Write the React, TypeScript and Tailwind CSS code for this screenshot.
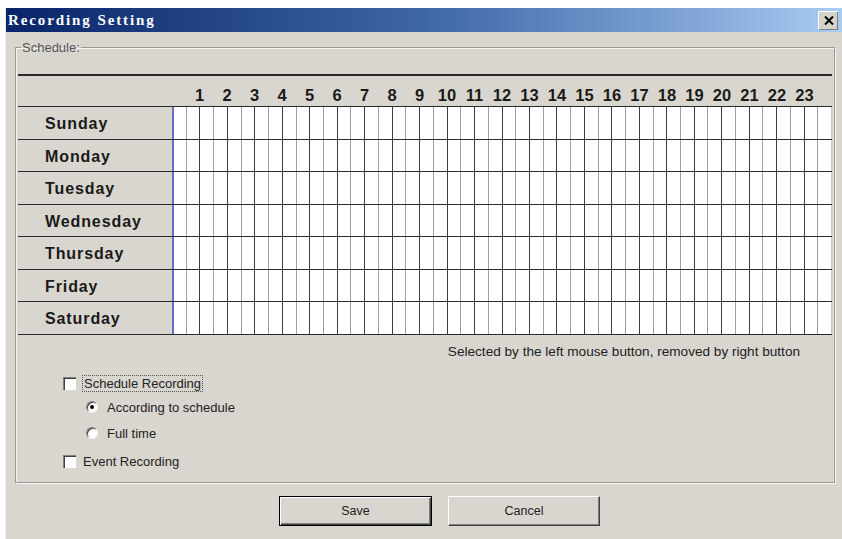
import React from "react";

const days = ["Sunday", "Monday", "Tuesday", "Wednesday", "Thursday", "Friday", "Saturday"];
const hours = Array.from({ length: 23 }, (_, i) => i + 1);
const halves = Array.from({ length: 48 }, (_, i) => i);

function cellBorder(i: number) {
  if (i === 0) return "border-l-2 border-[#6a6ad0]";
  if (i % 2 === 0) return "border-l border-[#3a3a55]";
  return "border-l border-[#a0a0a0]";
}

function Checkbox({ label, focused }: { label: string; focused?: boolean }) {
  return (
    <div className="flex items-center gap-[7px] pl-[45px]">
      <span className="block w-[13px] h-[13px] bg-white border-t border-l border-[#808080] border-b-white border-r-white shadow-[inset_1px_1px_0_#404040]" />
      <span className={focused ? "outline outline-1 outline-dotted outline-[#555] px-[1px] leading-[15px]" : "leading-[15px]"}>
        {label}
      </span>
    </div>
  );
}

function Radio({ label, checked }: { label: string; checked?: boolean }) {
  return (
    <div className="flex items-center gap-[9px] pl-[68px]">
      <span className="flex items-center justify-center w-[12px] h-[12px] rounded-full bg-white border border-t-[#808080] border-l-[#808080] border-b-[#f4f4f4] border-r-[#f4f4f4] shadow-[inset_1px_1px_0_#404040]">
        {checked && <span className="block w-[4px] h-[4px] rounded-full bg-black" />}
      </span>
      <span className="leading-[15px]">{label}</span>
    </div>
  );
}

export default function App() {
  return (
    <div className="w-[842px] h-[539px] bg-white pt-[8px] pl-[5px] overflow-hidden">
      <div
        className="w-[837px] h-[531px] bg-[#d9d6cf] flex flex-col border-l border-[#ecebe6] text-[#111]"
        style={{ fontFamily: '"Liberation Sans", Arial, sans-serif' }}
      >
        {/* title bar */}
        <div className="h-[24px] shrink-0 bg-gradient-to-r from-[#0a246a] via-[#3f66a6] to-[#a8ccf2] flex items-center justify-between pl-[2px] pr-[4px]">
          <span
            className="text-white font-bold text-[15px] tracking-[1.9px]"
            style={{ fontFamily: '"Liberation Serif", "Times New Roman", serif' }}
          >
            Recording Setting
          </span>
          <span className="flex items-center justify-center w-[20px] h-[19px] bg-[#d6d3cc] border-t border-l border-white border-b-[#404040] border-r-[#404040] shadow-[inset_-1px_-1px_0_#808080]">
            <svg width="10" height="9" viewBox="0 0 10 9">
              <path d="M1 0.5 L9 8.5 M9 0.5 L1 8.5" stroke="#000" strokeWidth="2" />
            </svg>
          </span>
        </div>

        {/* body */}
        <div className="flex-1 flex flex-col pt-[9px] pl-[9px] pr-[7px]">
          <fieldset className="h-[442px] border border-[#9d9a93] shadow-[inset_1px_1px_0_#f6f5f2,1px_1px_0_#f6f5f2] pl-[2px] pr-[2px]">
            <legend className="ml-[3px] px-[1px] text-[13px] leading-[13px] text-[#555]">Schedule:</legend>

            <div className="mt-[20px] w-[814px] border-t-2 border-[#2a2a2a]">
              {/* hour header */}
              <div className="flex h-[30px] items-center pt-[8px]">
                <div className="w-[167.75px] shrink-0" />
                {hours.map((h) => (
                  <div key={h} className="w-[27.5px] shrink-0 text-center font-bold text-[16.5px] leading-[18px] text-[#1a1a1a]">
                    {h}
                  </div>
                ))}
              </div>

              {/* day rows */}
              <div className="border-t border-[#2a2a2a]">
                {days.map((d) => (
                  <div key={d} className="flex h-[32.5px] border-b border-[#2a2a2a]">
                    <div className="w-[154px] shrink-0 flex items-center pl-[27px] pt-[3px] font-bold text-[16px] tracking-[0.9px] text-[#1a1a1a]">
                      {d}
                    </div>
                    <div className="w-[660px] grid grid-cols-[repeat(48,minmax(0,1fr))] bg-white border-r border-[#c8c8c8]">
                      {halves.map((i) => (
                        <div key={i} className={cellBorder(i)} />
                      ))}
                    </div>
                  </div>
                ))}
              </div>

              <div className="text-right pr-[32px] pt-[9px] text-[13.6px] leading-[16px] text-[#222]">
                Selected by the left mouse button, removed by right button
              </div>
            </div>

            <div className="flex flex-col text-[13px] text-[#222] mt-[16px]">
              <Checkbox label="Schedule Recording" focused />
              <div className="mt-[9px]">
                <Radio label="According to schedule" checked />
              </div>
              <div className="mt-[11px]">
                <Radio label="Full time" />
              </div>
              <div className="mt-[13px]">
                <Checkbox label="Event Recording" />
              </div>
            </div>
          </fieldset>

          {/* buttons */}
          <div className="flex gap-[16px] pl-[264px] mt-[13px] text-[12.5px] text-[#222]">
            <button className="w-[153px] h-[30px] bg-[#d9d6cf] border border-black shadow-[inset_1px_1px_0_#fff,inset_-1px_-1px_0_#404040,inset_-2px_-2px_0_#808080]">
              Save
            </button>
            <button className="w-[152px] h-[30px] bg-[#d9d6cf] border border-t-white border-l-white border-b-[#404040] border-r-[#404040] shadow-[inset_-1px_-1px_0_#808080]">
              Cancel
            </button>
          </div>
        </div>
      </div>
    </div>
  );
}
